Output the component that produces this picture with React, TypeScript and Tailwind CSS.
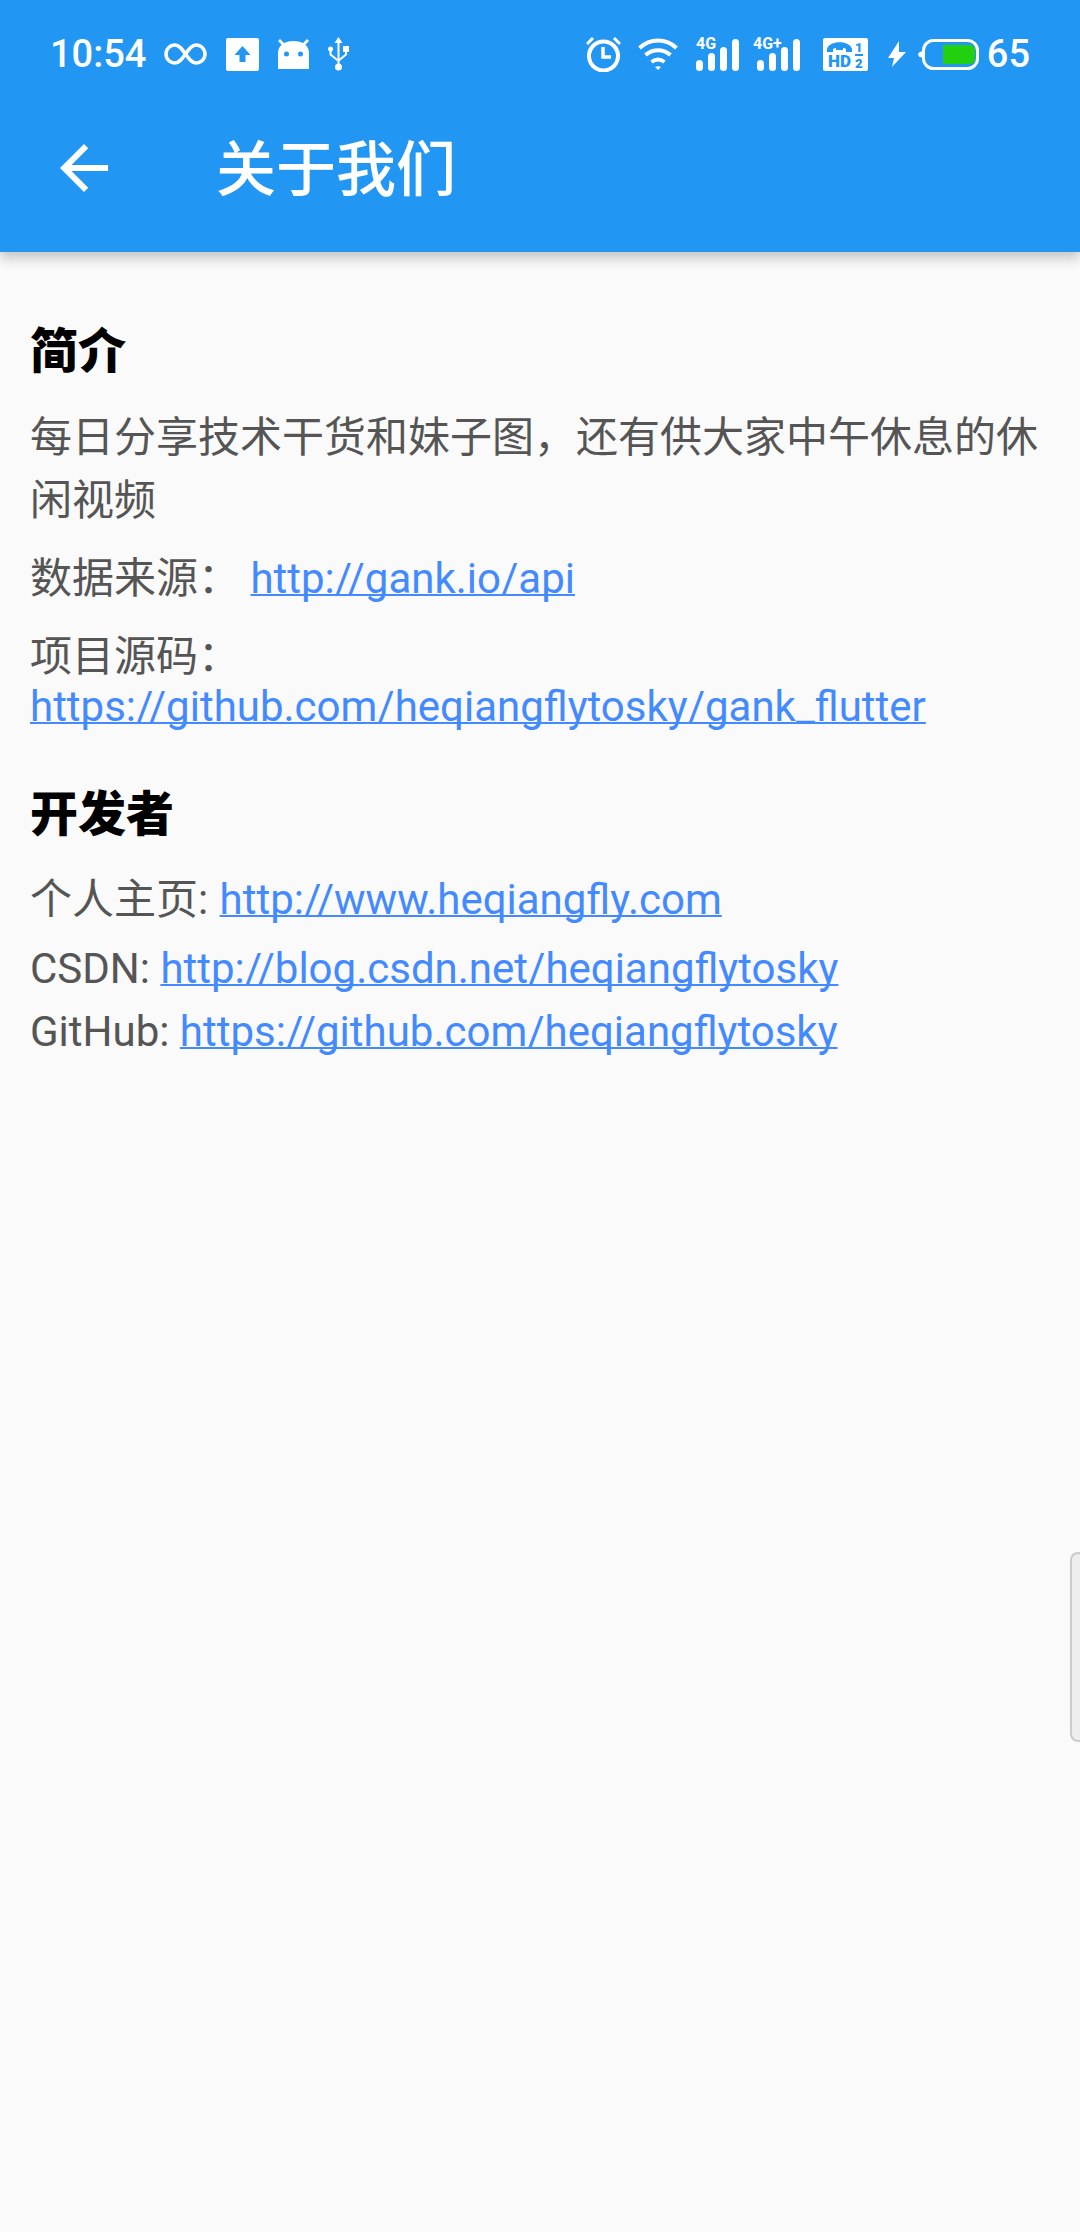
const textFont = "font-['Roboto','Noto_Sans_CJK_SC',sans-serif]";

function Infinity8() {
  return (
    <svg width="43" height="22" viewBox="0 0 43 22" fill="none" stroke="white" strokeWidth="3.500">
      <path d="M21.500 11C18 6 15 2 11 2a9 9 0 0 0 0 18c4 0 7-4 10.500-9s6.500-9 10.500-9a9 9 0 0 1 0 18c-4 0-7-4-10.500-9z" />
    </svg>
  );
}

function UploadBox() {
  return (
    <svg width="33" height="33" viewBox="0 0 33 33">
      <rect width="33" height="33" rx="2" fill="white" />
      <path d="M16.500 8l8 9h-5v7h-6v-7h-5z" fill="#2196F3" />
    </svg>
  );
}

function AndroidHead() {
  return (
    <svg width="31" height="30" viewBox="0 0 31 30" fill="white">
      <path d="M0 30V14C0 6 7 2 15.500 2S31 6 31 14v16z" />
      <path d="M2 0l5 5-2 2-5-5zM29 0l2 2-5 5-2-2z" />
      <circle cx="8.500" cy="15" r="2.500" fill="#2196F3" />
      <circle cx="22.500" cy="15" r="2.500" fill="#2196F3" />
    </svg>
  );
}

function Usb() {
  return (
    <svg width="21" height="34" viewBox="0 0 21 34" fill="white">
      <path d="M10.500 0l4 6h-3v22h-2V6h-3z" />
      <circle cx="10.500" cy="30" r="3.500" />
      <circle cx="2.500" cy="12" r="2.500" />
      <rect x="15" y="9" width="6" height="6" />
      <path d="M1.500 13h2v4l6 5v2.500l-8-6.500zM17 14h2v4l-8 6.500V22l6-5z" />
    </svg>
  );
}

function Alarm() {
  return (
    <svg width="35" height="35" viewBox="0 0 35 35" fill="none" stroke="white">
      <circle cx="17.500" cy="19" r="14.500" strokeWidth="4" />
      <path d="M17 10v10h8" strokeWidth="3.500" />
      <path d="M1 7l6-6M34 7l-6-6" strokeWidth="3" />
    </svg>
  );
}

function Wifi() {
  return (
    <svg width="40" height="32" viewBox="0 0 40 32" fill="none" stroke="white" strokeWidth="4">
      <path d="M1.500 10C12 0 28 0 38.500 10" />
      <path d="M7.500 17c7.500-6.500 17.500-6.500 25 0" />
      <path d="M13.500 24c4-3 9-3 13 0" />
      <path d="M17 29l3 3 3-3c-2-1-4-1-6 0z" fill="white" stroke="none" />
    </svg>
  );
}

function Signal({ label, width }: { label: string; width: number }) {
  const bars = [
    { x: 0, y: 23, h: 11 },
    { x: 12, y: 16, h: 18 },
    { x: 24, y: 10, h: 24 },
    { x: 36, y: 2, h: 32 },
  ];
  return (
    <svg className="overflow-visible" width={width} height="34" viewBox={`0 0 ${width} 34`} fill="white">
      {bars.map((b) => (
        <rect key={b.x} x={b.x + width - 43} y={b.y} width="7" height={b.h} rx="3.500" />
      ))}
      <text x="0" y="12" fontFamily="Roboto" fontWeight="700" fontSize="16">
        {label}
      </text>
    </svg>
  );
}

function SimBox() {
  return (
    <svg className="overflow-visible" width="45" height="33" viewBox="0 0 45 33">
      <rect width="45" height="33" rx="2" fill="white" />
      <path d="M4 11C6 2 27 2 29 11v3h-6v-3c-3-2-10-2-13 0v3H4z" fill="#2196F3" />
      <path d="M13 9h7v3h-7z" fill="#2196F3" />
      <text x="5" y="29" fontFamily="Roboto" fontWeight="900" fontSize="17" fill="#2196F3">HD</text>
      <text x="32" y="14" fontFamily="Roboto" fontWeight="900" fontSize="13" fill="#2196F3">1</text>
      <rect x="32" y="16" width="8" height="2" fill="#2196F3" />
      <text x="32" y="30" fontFamily="Roboto" fontWeight="900" fontSize="13" fill="#2196F3">2</text>
    </svg>
  );
}

function Bolt() {
  return (
    <svg width="18" height="26" viewBox="0 0 18 26" fill="white">
      <path d="M11 0L0 17h6l-2 9 14-15h-7z" />
    </svg>
  );
}

function Battery() {
  return (
    <svg width="61" height="31" viewBox="0 0 61 31">
      <rect x="5.500" y="1.500" width="54" height="28" rx="10" fill="none" stroke="white" strokeWidth="3" />
      <path d="M0 15.500a4 4 0 0 1 4-3v6a4 4 0 0 1-4-3z" fill="white" />
      <path d="M25 6h27a5 5 0 0 1 5 5v9a5 5 0 0 1-5 5H25z" fill="#22D00F" />
    </svg>
  );
}

function StatusBar() {
  return (
    <div className="flex h-[84px] items-center justify-between pl-[50px] pr-[50px] pt-6 text-white">
      <div className="flex items-center">
        <span className="font-['Roboto',sans-serif] text-[38px] font-medium leading-none">10:54</span>
        <div className="ml-[18px] flex items-center gap-[19px]">
          <Infinity8 />
          <UploadBox />
          <AndroidHead />
          <Usb />
        </div>
      </div>
      <div className="flex items-center">
        <Alarm />
        <div className="ml-[17px]"><Wifi /></div>
        <div className="ml-[18px]"><Signal label="4G" width={43} /></div>
        <div className="ml-[14px]"><Signal label="4G+" width={47} /></div>
        <div className="ml-[23px]"><SimBox /></div>
        <div className="ml-[20px]"><Bolt /></div>
        <div className="ml-3"><Battery /></div>
        <span className="ml-2 font-['Roboto',sans-serif] text-[38px] font-medium leading-none">65</span>
      </div>
    </div>
  );
}

function AppBar() {
  return (
    <div className="flex h-[168px] items-center pl-12">
      <svg width="72" height="72" viewBox="0 0 24 24" fill="white">
        <path d="M20 11H7.830l5.590-5.590L12 4l-8 8 8 8 1.410-1.410L7.830 13H20v-2z" />
      </svg>
      <h1 className={`ml-[96px] mt-[5px] text-[60px] font-medium leading-none text-white ${textFont}`}>关于我们</h1>
    </div>
  );
}

function Link({ href }: { href: string }) {
  return <a className="text-[#448AFF] underline decoration-2 [text-decoration-skip-ink:none]">{href}</a>;
}

export default function App() {
  return (
    <div className={`relative min-h-[2232px] overflow-hidden bg-[#FAFAFA] ${textFont}`}>
      <header className="relative z-10 bg-[#2196F3] shadow-[0_6px_12px_rgba(0,0,0,0.22)]">
        <StatusBar />
        <AppBar />
      </header>

      <main className="px-[30px] pt-[67px] text-[42px] text-[#555555]">
        <h2 className="text-[48px] font-black leading-[66px] text-black">简介</h2>
        <p className="mt-[21px] leading-[63px]">每日分享技术干货和妹子图，还有供大家中午休息的休闲视频</p>
        <p className="mt-[16px] leading-[62px]">
          数据来源： <Link href="http://gank.io/api" />
        </p>
        <p className="mt-[22px] leading-[50px]">
          项目源码： <Link href="https://github.com/heqiangflytosky/gank_flutter" />
        </p>
        <h2 className="mt-[50px] text-[48px] font-black leading-[66px] text-black">开发者</h2>
        <p className="mt-[21px] leading-[62px]">
          个人主页: <span className="ml-px"><Link href="http://www.heqiangfly.com" /></span>
        </p>
        <p className="mt-[7px] leading-[62px]">
          CSDN: <Link href="http://blog.csdn.net/heqiangflytosky" />
        </p>
        <p className="mt-px leading-[62px]">
          GitHub: <Link href="https://github.com/heqiangflytosky" />
        </p>
      </main>

      <div className="absolute right-0 top-[1552px] h-[190px] w-[10px] rounded-l-lg border-2 border-r-0 border-[#CCCCCC] bg-[#EEEEEE]" />
    </div>
  );
}
